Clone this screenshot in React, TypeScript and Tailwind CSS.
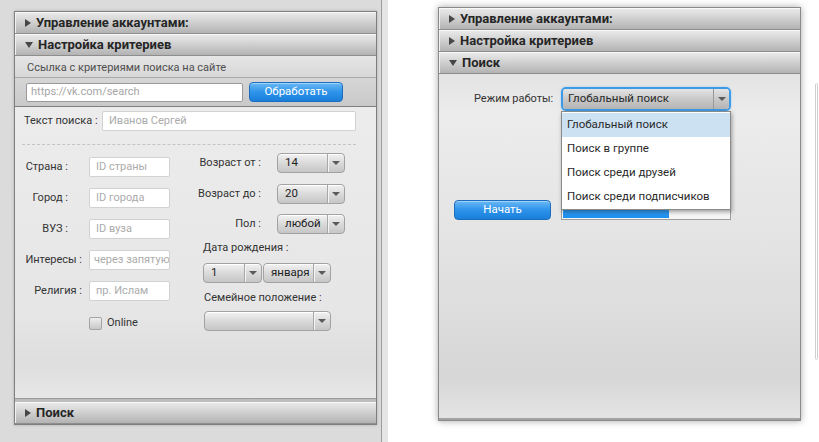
import type { ReactNode } from "react";

function Arrow({ open }: { open?: boolean }) {
  return open ? (
    <svg width="8" height="6" viewBox="0 0 8 6">
      <path d="M0 0h8L4 6z" fill="#474747" />
    </svg>
  ) : (
    <svg width="6" height="8" viewBox="0 0 6 8">
      <path d="M0 0l6 4-6 4z" fill="#474747" />
    </svg>
  );
}

function Header({ title, open }: { title: string; open?: boolean }) {
  return (
    <div className="flex h-[22px] items-center gap-[5px] border-b border-[#8e8e8e] bg-[linear-gradient(#ebebeb,#cdcdcd_55%,#b3b3b3)] pl-[10px] shadow-[inset_0_1px_0_#f8f8f8,inset_1px_0_0_#f2f2f2]">
      <Arrow open={open} />
      <span className="whitespace-nowrap text-[13px] font-bold leading-none text-[#262626]">{title}</span>
    </div>
  );
}

function Field({ placeholder, className }: { placeholder: string; className: string }) {
  return (
    <div className={`flex items-center overflow-hidden whitespace-nowrap rounded-[2px] border border-[#d2d2d2] bg-white pl-[6px] text-[11px] text-[#ababab] ${className}`}>
      {placeholder}
    </div>
  );
}

function Combo({ value, className }: { value?: string; className: string }) {
  return (
    <div className={`flex items-center rounded-[4px] border border-[#a2a2a2] bg-[linear-gradient(#f2f2f2,#dadada_50%,#c6c6c6)] shadow-[inset_0_1px_0_#fff] ${className}`}>
      <span className="flex-1 truncate pl-[7px] text-[11.5px] text-[#222]">{value}</span>
      <div className="flex h-full w-[17px] items-center justify-center border-l border-[#a8a8a8] shadow-[inset_1px_0_0_#f4f4f4]">
        <svg width="8" height="4" viewBox="0 0 8 4">
          <path d="M0 0h8L4 4z" fill="#5a5a5a" />
        </svg>
      </div>
    </div>
  );
}

function BlueButton({ children, className }: { children: ReactNode; className: string }) {
  return (
    <div className={`flex items-center justify-center whitespace-nowrap rounded-[4px] border border-[#1c6dbd] bg-[linear-gradient(#6ab9f5,#2e93ea_50%,#1a7fda)] text-[11.5px] text-white shadow-[inset_0_1px_0_#9fd2fa] ${className}`}>
      {children}
    </div>
  );
}

function Label({ text, className }: { text: string; className: string }) {
  return (
    <div className={`flex shrink-0 justify-end ${className}`}>
      <span className="shrink-0 whitespace-nowrap text-[11px] text-[#333]">{text}</span>
    </div>
  );
}

function Row({ label, pr, children }: { label: string; pr: string; children: ReactNode }) {
  return (
    <div className="flex h-[20px] items-center">
      <Label text={label} className={`w-[67px] ${pr}`} />
      {children}
    </div>
  );
}

function CriteriaForm() {
  return (
    <div className="h-[291px] bg-[linear-gradient(#ececec,#e6e6e6_70%,#dedede_88%,#e7e7e7)] pl-[7px] pr-[20px] pt-[4px]">
      <div className="flex h-[20px] items-center">
        <span className="w-[80px] shrink-0 whitespace-nowrap pl-[2px] text-[11px] text-[#333]">Текст поиска :</span>
        <Field placeholder="Иванов Сергей" className="h-[20px] flex-1" />
      </div>
      <div className="mt-[13px] border-t border-dashed border-[#c4c4c4]" />
      <div className="flex">
        <div className="mt-[12px] flex w-[181px] shrink-0 flex-col gap-[11px]">
          <Row label="Страна :" pr="pr-[21px]">
            <Field placeholder="ID страны" className="h-[20px] w-[81px]" />
          </Row>
          <Row label="Город :" pr="pr-[21px]">
            <Field placeholder="ID города" className="h-[20px] w-[81px]" />
          </Row>
          <Row label="ВУЗ :" pr="pr-[21px]">
            <Field placeholder="ID вуза" className="h-[20px] w-[81px]" />
          </Row>
          <Row label="Интересы :" pr="pr-[7px]">
            <Field placeholder="через запятую" className="h-[20px] w-[81px] !pl-[4px]" />
          </Row>
          <Row label="Религия :" pr="pr-[7px]">
            <Field placeholder="пр. Ислам" className="h-[20px] w-[81px]" />
          </Row>
          <div className="mt-[3px] flex items-center gap-[5px] pl-[67px]">
            <div className="h-[13px] w-[13px] rounded-[2px] border border-[#a4a4a4] bg-[linear-gradient(#eeeeee,#c8c8c8)]" />
            <span className="text-[11px] text-[#333]">Online</span>
          </div>
        </div>
        <div className="mt-[8px] flex flex-col">
          <div className="flex h-[20px] items-center">
            <Label text="Возраст от :" className="w-[58px]" />
            <Combo value="14" className="ml-[16px] h-[20px] w-[68px]" />
          </div>
          <div className="mt-[11px] flex h-[20px] items-center">
            <Label text="Возраст до :" className="w-[58px]" />
            <Combo value="20" className="ml-[16px] h-[20px] w-[68px]" />
          </div>
          <div className="mt-[10px] flex h-[20px] items-center">
            <Label text="Пол :" className="w-[58px]" />
            <Combo value="любой" className="ml-[16px] h-[20px] w-[68px]" />
          </div>
          <span className="mt-[6px] h-[16px] whitespace-nowrap text-[11px] leading-[16px] text-[#333]">Дата рождения :</span>
          <div className="mt-[7px] flex gap-[1px]">
            <Combo value="1" className="h-[20px] w-[59px]" />
            <Combo value="января" className="h-[20px] w-[68px]" />
          </div>
          <span className="mt-[7px] h-[16px] whitespace-nowrap pl-[1px] text-[11px] leading-[16px] text-[#333]">Семейное положение :</span>
          <Combo className="ml-[1px] mt-[5px] h-[20px] w-[127px]" />
        </div>
      </div>
    </div>
  );
}

function LeftWindow() {
  return (
    <div className="flex h-full">
      <div className="h-full w-[381px] bg-[#dbdbdb] pl-[14px] pt-[11px]">
        <div className="w-[363px] border border-[#7f7f7f] shadow-[0_0_3px_rgba(0,0,0,0.2)]">
          <Header title="Управление аккаунтами:" />
          <Header title="Настройка критериев" open />
          <div className="flex h-[21px] items-center whitespace-nowrap bg-[linear-gradient(#e6e6e6,#d7d7d7)] pl-[12px] pt-[3px] text-[11px] text-[#4e4e4e]">
            Ссылка с критериями поиска на сайте
          </div>
          <div className="flex h-[30px] items-center gap-[6px] border-y border-t-[#a9a9a9] border-b-[#7f7f7f] bg-[linear-gradient(#d6d6d6,#c9c9c9)] pl-[11px]">
            <div className="flex h-[19px] w-[217px] items-center rounded-[2px] border border-[#9a9a9a] bg-white pl-[4px] text-[11px] text-[#a6a6a6]">
              https://vk.com/search
            </div>
            <BlueButton className="h-[20px] w-[94px]">Обработать</BlueButton>
          </div>
          <CriteriaForm />
          <div className="h-[4px] border-t border-[#9c9c9c] bg-[#bdbdbd]" />
          <Header title="Поиск" />
        </div>
      </div>
      <div className="h-full w-[1px] bg-[#9b9b9b]" />
      <div className="h-full w-[6px] bg-[#e5e5e5]" />
    </div>
  );
}

function SearchPane() {
  const options = ["Глобальный поиск", "Поиск в группе", "Поиск среди друзей", "Поиск среди подписчиков"];
  return (
    <div className="relative h-[344px] bg-[linear-gradient(#e3e3e3,#ececec_12%,#e2e2e2_55%,#d6d6d6_88%,#e4e4e4)] pt-[13px]">
      <div className="flex items-center">
        <span className="w-[122px] shrink-0 whitespace-nowrap pl-[35px] text-[11px] text-[#333]">Режим работы:</span>
        <div className="rounded-[5px] border-2 border-[#3d9ae6] shadow-[0_0_2px_#8cc6f3]">
          <div className="flex h-[20px] w-[166px] items-center rounded-[3px] bg-[linear-gradient(#e4e4e4,#c9c9c9_50%,#b4b4b4)]">
            <span className="flex-1 whitespace-nowrap pl-[5px] text-[11.5px] text-[#2a2a2a]">Глобальный поиск</span>
            <div className="flex h-full w-[16px] items-center justify-center border-l border-[#999]">
              <svg width="8" height="4" viewBox="0 0 8 4">
                <path d="M0 0h8L4 4z" fill="#5a5a5a" />
              </svg>
            </div>
          </div>
        </div>
      </div>
      <div className="mt-[89px] flex items-center">
        <BlueButton className="ml-[15px] h-[20px] w-[97px]">Начать</BlueButton>
        <div className="ml-[10px] h-[19px] w-[170px] border border-[#9c9c9c] bg-[#f6f6f6] p-[1px]">
          <div className="h-full w-[106px] bg-[linear-gradient(#47a8f8,#1d8ff0)]" />
        </div>
      </div>
      <div className="absolute left-[122px] top-[37px] z-10 w-[170px] border border-[#8a8a8a] bg-white pt-[1px] shadow-[1px_2px_4px_rgba(0,0,0,0.35)]">
        {options.map((o, i) => (
          <div
            key={o}
            className={`flex h-[24px] items-center whitespace-nowrap pl-[5px] text-[11.5px] text-[#2a2a2a] ${i === 0 ? "bg-[#cce1f2]" : ""}`}
          >
            {o}
          </div>
        ))}
      </div>
    </div>
  );
}

function RightWindow() {
  return (
    <div className="flex h-full flex-1 bg-white">
      <div className="ml-[50px] mt-[7px] h-[414px] w-[363px] border border-[#8a8a8a] shadow-[0_0_7px_rgba(0,0,0,0.35)]">
        <Header title="Управление аккаунтами:" />
        <Header title="Настройка критериев" />
        <Header title="Поиск" open />
        <SearchPane />
        <div className="h-[2px] bg-[#a3a3a3]" />
      </div>
      <div className="ml-[14px] mt-[83px] h-[277px] w-[3px] rounded-full border border-[#cfcfcf] bg-white" />
    </div>
  );
}

export default function App() {
  return (
    <div className="flex h-[442px] w-[819px] overflow-hidden bg-white font-['Roboto',sans-serif]">
      <LeftWindow />
      <RightWindow />
    </div>
  );
}
